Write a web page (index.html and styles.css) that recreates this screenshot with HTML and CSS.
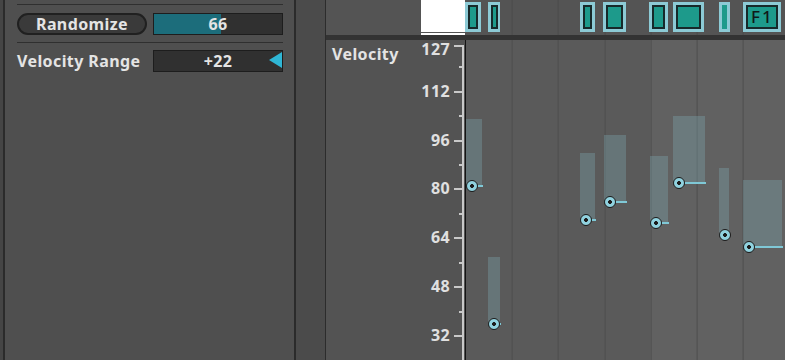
FILE: index.html
```html
<!DOCTYPE html>
<html lang="en">
<head>
    <meta charset="UTF-8">
    <meta name="viewport" content="width=device-width, initial-scale=1.0">
    <title>Velocity Editor</title>
    <link rel="stylesheet" href="styles.css">
</head>
<body>
    <div class="app">
        <aside class="device">
            <div class="sep"></div>
            <div class="row">
                <button class="pill">Randomize</button>
                <div class="field">
                    <div class="fill" style="width: 52%"></div>
                    <span>66</span>
                </div>
            </div>
            <div class="sep"></div>
            <div class="row row-range">
                <span class="label">Velocity Range</span>
                <div class="field">
                    <span>+22</span>
                    <i class="arrow"></i>
                </div>
            </div>
        </aside>

        <div class="gutter"></div>

        <section class="editor">
            <div class="clips">
                <div class="clips-head"><div class="loop"></div></div>
                <div class="clips-lane">
                    <div class="clip" style="--x:0;--w:16"><div class="clip-body"></div></div>
                    <div class="clip" style="--x:23;--w:12"><div class="clip-body"></div></div>
                    <div class="clip" style="--x:115;--w:15"><div class="clip-body"></div></div>
                    <div class="clip" style="--x:138;--w:23"><div class="clip-body"></div></div>
                    <div class="clip" style="--x:184;--w:19"><div class="clip-body"></div></div>
                    <div class="clip" style="--x:208;--w:31"><div class="clip-body"></div></div>
                    <div class="clip thin" style="--x:254;--w:11"><div class="clip-body"></div></div>
                    <div class="clip" style="--x:278;--w:38"><div class="clip-body">F1</div></div>
                </div>
            </div>

            <div class="bar"></div>

            <div class="velocity">
                <div class="axis">
                    <div class="axis-title">Velocity</div>
                    <div class="axis-line"></div>
                    <div class="tick top" style="--v:127"><span>127</span></div>
                    <div class="tick minor" style="--v:120"></div>
                    <div class="tick" style="--v:112"><span>112</span></div>
                    <div class="tick minor" style="--v:104"></div>
                    <div class="tick" style="--v:96"><span>96</span></div>
                    <div class="tick minor" style="--v:88"></div>
                    <div class="tick" style="--v:80"><span>80</span></div>
                    <div class="tick minor" style="--v:72"></div>
                    <div class="tick" style="--v:64"><span>64</span></div>
                    <div class="tick minor" style="--v:56"></div>
                    <div class="tick" style="--v:48"><span>48</span></div>
                    <div class="tick minor" style="--v:40"></div>
                    <div class="tick" style="--v:32"><span>32</span></div>
                </div>
                <div class="lane">
                    <div class="note" style="--x:0;--w:16;--v:81"><i class="dot"></i></div>
                    <div class="note" style="--x:22;--w:12;--v:36"><i class="dot"></i></div>
                    <div class="note" style="--x:114;--w:15;--v:70"><i class="dot"></i></div>
                    <div class="note" style="--x:138;--w:22;--v:76"><i class="dot"></i></div>
                    <div class="note" style="--x:184;--w:18;--v:69"><i class="dot"></i></div>
                    <div class="note" style="--x:207;--w:32;--v:82"><i class="dot"></i></div>
                    <div class="note" style="--x:253;--w:10;--v:65"><i class="dot"></i></div>
                    <div class="note" style="--x:277;--w:39;--v:61"><i class="dot"></i></div>
                </div>
            </div>
        </section>
    </div>
</body>
</html>
```

FILE: styles.css
```css
* {
    box-sizing: border-box;
}
body {
    margin: 0;
    background-color: #454545;
    font-family: "Noto Sans", "Liberation Sans", Arial, sans-serif;
    font-weight: 700;
    font-size: 16px;
    letter-spacing: 0.4px;
    color: #e4e4e4;
    overflow: hidden;
}
.app {
    display: flex;
    height: 360px;
    padding-left: 3px;
}

/* left device panel */
.device {
    width: 293px;
    background-color: #4f4f4f;
    border-left: 2px solid #2b2b2b;
    border-right: 2px solid #2b2b2b;
    padding: 4px 11px 0 12px;
}
.sep {
    height: 1px;
    background-color: #2f2f2f;
}
.row {
    display: grid;
    grid-template-columns: 1fr 1fr;
    gap: 6px;
    height: 22px;
    margin: 8px 0 7px;
    align-items: center;
}
.row-range {
    margin-top: 7px;
}
.pill {
    font: inherit;
    letter-spacing: inherit;
    color: inherit;
    height: 22px;
    padding: 0;
    background-color: #3a3a3a;
    border: 2px solid #202020;
    border-radius: 11px;
    line-height: 18px;
}
.label {
    line-height: 22px;
}
.field {
    position: relative;
    height: 22px;
    background-color: #303030;
    border: 1px solid #1d1d1d;
    display: flex;
    align-items: center;
    justify-content: center;
    line-height: 20px;
}
.field span {
    position: relative;
}
.fill {
    position: absolute;
    left: 0;
    top: 0;
    bottom: 0;
    background-color: #1c6d7b;
}
.arrow {
    position: absolute;
    right: 0;
    top: 1px;
    width: 0;
    height: 0;
    border-top: 8.5px solid transparent;
    border-bottom: 8.5px solid transparent;
    border-right: 13px solid #2fb6d5;
}

.gutter {
    width: 30px;
    background-color: #4b4b4b;
    border-right: 1px solid #2c2c2c;
}

/* editor */
.editor {
    flex: 1;
    display: flex;
    flex-direction: column;
}
.clips {
    display: flex;
    height: 35px;
    background-color: #545454;
}
.clips-head {
    width: 139px;
    display: flex;
    justify-content: flex-end;
}
.loop {
    width: 44px;
    height: 35px;
    background: linear-gradient(#ffffff 0 32px, transparent 32px 33px, #ffffff 33px 35px);
}
.clips-lane {
    flex: 1;
    position: relative;
    background-image: repeating-linear-gradient(90deg, transparent 0 45.2px, #4a4a4a 45.2px 46.2px);
    background-position: 1.6px 0;
}
.clip {
    position: absolute;
    top: 2px;
    height: 30px;
    left: calc(var(--x) * 1px);
    width: calc(var(--w) * 1px);
    background-color: #8ccad5;
    padding: 3px;
}
.clip-body {
    height: 100%;
    background-color: #1d9a8b;
    border: 2px solid #17292a;
    color: #101818;
    font-weight: 500;
    font-size: 17px;
    letter-spacing: 2px;
    line-height: 20px;
    padding-left: 3px;
}
.thin .clip-body {
    border: none;
}
.bar {
    height: 5px;
    background-color: #333333;
}
.velocity {
    flex: 1;
    display: flex;
}
.axis {
    width: 139px;
    position: relative;
    background-color: #535353;
}
.axis-title {
    padding: 5px 0 0 6px;
    line-height: 18px;
}
.axis-line {
    position: absolute;
    right: 1px;
    top: 5px;
    bottom: 0;
    width: 2px;
    background-color: #c9c9c9;
}
.tick {
    position: absolute;
    right: 1px;
    width: 10px;
    height: 2px;
    top: calc(5px + (127 - var(--v)) * 3.053px);
    background-color: #c9c9c9;
}
.tick.minor {
    width: 5px;
}
.tick span {
    position: absolute;
    right: 14px;
    top: -9px;
    line-height: 18px;
    color: #e0e0e0;
}
.tick.top span {
    top: -5px;
}
.lane {
    flex: 1;
    position: relative;
    border-left: 1px solid #141414;
    background-image:
        repeating-linear-gradient(90deg, transparent 0 45.2px, #4d4d4d 45.2px 46.2px),
        linear-gradient(90deg, #5a5a5a 0 184px, #616161 184px);
    background-position: 0.6px 0, 0 0;
}
.note {
    position: absolute;
    left: calc(var(--x) * 1px);
    width: calc(var(--w) * 1px + 1px);
    top: calc(5px + (127 - var(--v)) * 3.053px);
    height: 2px;
    background-color: #7fc8d6;
}
.note::before {
    content: "";
    position: absolute;
    left: 0;
    right: 1px;
    bottom: 100%;
    height: 66px;
    background-color: rgba(125, 165, 175, 0.36);
}
.dot {
    position: absolute;
    left: -0.5px;
    top: -5px;
    width: 12px;
    height: 12px;
    border-radius: 50%;
    border: 1.5px solid #1c1c1c;
    background: radial-gradient(circle, #1c1c1c 0 1.6px, #90d2df 2.2px);
}
```
